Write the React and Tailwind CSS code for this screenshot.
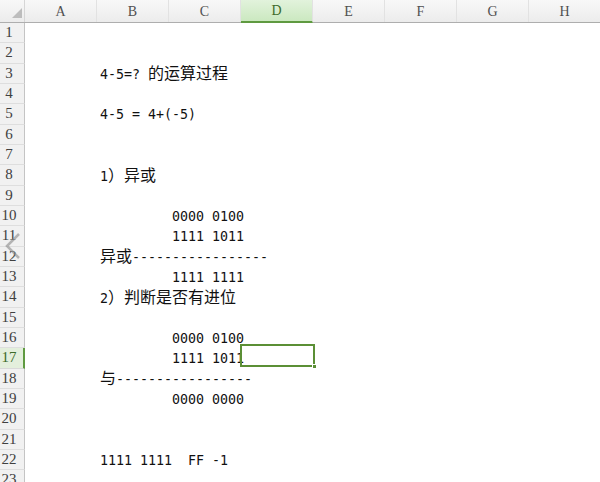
import React from "react";

const COLS = ["A", "B", "C", "D", "E", "F", "G", "H"];

const DATA = {
  3: { B: "4-5=? 的运算过程" },
  5: { B: "4-5 = 4+(-5)" },
  8: { B: "1）异或" },
  10: { C: "0000 0100" },
  11: { C: "1111 1011" },
  12: { B: "异或-----------------" },
  13: { C: "1111 1111" },
  14: { B: "2）判断是否有进位" },
  16: { C: "0000 0100" },
  17: { C: "1111 1011" },
  18: { B: "与-----------------" },
  19: { C: "0000 0000" },
  22: { B: "1111 1111  FF -1" },
};

function Txt({ s }) {
  const parts = s.split(/([\u0000-\u00ff]+)/).filter((p) => p.length > 0);
  return (
    <span className="whitespace-pre text-[#111] leading-[16px]">
      {parts.map((p, i) =>
        /^[\u0000-\u00ff]+$/.test(p) ? (
          <span
            key={i}
            className="font-['DejaVu_Sans_Mono',monospace] text-[13.3px] leading-[16px]"
          >
            {p}
          </span>
        ) : (
          <span
            key={i}
            className="font-['Noto_Sans_CJK_SC','Noto_Sans',sans-serif] text-[16px] leading-[16px]"
          >
            {p}
          </span>
        )
      )}
    </span>
  );
}

export default function App() {
  const rows = Array.from({ length: 23 }, (_, i) => i + 1);
  return (
    <div className="relative w-[600px] h-[482px] overflow-hidden bg-white">
      {/* column header */}
      <div className="flex h-[23px] bg-gradient-to-b from-[#f8f8f8] to-[#ececec] border-b border-[#aeaeae]">
        <div className="relative w-[25px] shrink-0 border-r border-[#d6d6d6]">
          <svg className="absolute left-[12px] top-[8px]" width="10" height="10" viewBox="0 0 10 10">
            <polygon points="10,0 10,10 0,10" fill="#bdbdbd" />
          </svg>
        </div>
        {COLS.map((c) => (
          <div
            key={c}
            className={
              "w-[72px] shrink-0 flex items-center justify-center font-['Liberation_Serif',serif] text-[14px] border-r border-[#e2e2e2] " +
              (c === "D"
                ? "bg-gradient-to-b from-[#e2f3dc] to-[#cbe8c0] text-[#3d6b2a] border-b-2 border-b-[#5f9a40] -mb-px"
                : "text-[#505050]")
            }
          >
            {c}
          </div>
        ))}
      </div>

      {/* rows */}
      {rows.map((n) => (
        <div key={n} className="flex h-[20.33px]">
          <div
            className={
              "w-[25px] shrink-0 flex items-center border-b font-['Liberation_Serif',serif] text-[15px] leading-none " +
              (n === 17
                ? "bg-[#e3efdc] border-r-2 border-r-[#5f9a40] border-b-[#d9d9d9] text-[#3d6b2a]"
                : "bg-[#f1f1f1] border-r border-r-[#c4c4c4] border-b-[#dedede] text-[#404040]")
            }
          >
            <span className="w-[18px] text-center">{n}</span>
          </div>
          {COLS.map((c) => (
            <div
              key={c}
              className="relative w-[72px] shrink-0 flex items-center pl-[3px] overflow-visible"
            >
              {DATA[n] && DATA[n][c] ? <Txt s={DATA[n][c]} /> : null}
              {n === 17 && c === "D" ? (
                <div className="absolute left-[-1px] top-[-4px] w-[75px] h-[23px] border-2 border-[#5b8f35]">
                  <div className="absolute right-[-4px] bottom-[-4px] w-[5px] h-[5px] bg-[#5b8f35] border border-white" />
                </div>
              ) : null}
            </div>
          ))}
        </div>
      ))}

      {/* video overlay chevron */}
      <svg className="absolute left-[2px] top-[231px]" width="22" height="30" viewBox="0 0 22 30">
        <polyline points="17,3 5,15 17,27" fill="none" stroke="#8a8a8a" strokeOpacity="0.6" strokeWidth="2.5" />
      </svg>
    </div>
  );
}
